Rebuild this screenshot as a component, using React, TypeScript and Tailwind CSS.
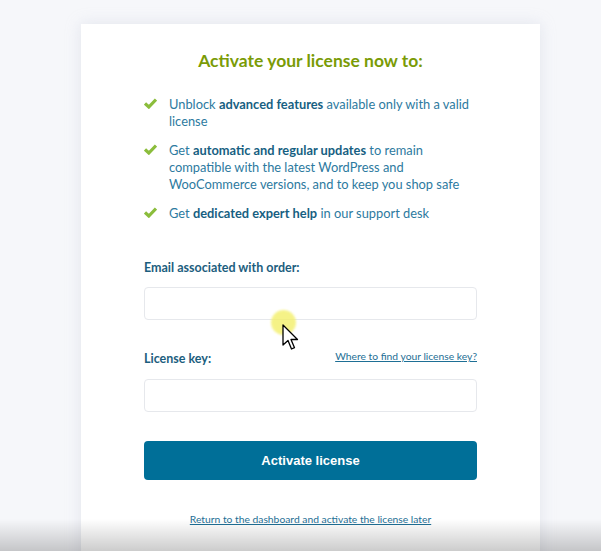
import React from "react";

function Check() {
  return (
    <svg width="13" height="11" viewBox="0 0 13 11" className="shrink-0 mt-[2px]">
      <path d="M1 5.5 L4.8 9 L12 1.5" fill="none" stroke="#8bbd3c" strokeWidth="3.2" strokeLinejoin="miter" />
    </svg>
  );
}

export default function App() {
  const font = { fontFamily: '"Lato", "Open Sans", sans-serif' };
  return (
    <div className="relative w-[601px] h-[551px] overflow-hidden bg-[#f6f7fa]" style={font}>
      <div className="flex justify-start pt-[24px] pl-[81px]">
        <div className="w-[459px] h-[560px] bg-white shadow-[0_0_14px_rgba(190,195,215,0.35)] px-[63px] pt-[25px] flex flex-col">
          <h1 className="text-center text-[17.5px] leading-[24px] font-bold text-[#7a9b06]">
            Activate your license now to:
          </h1>
          <ul className="mt-[23px] flex flex-col gap-[12px] text-[12.85px] leading-[17px] text-[#2d7aa0]">
            <li className="flex gap-[12px]">
              <Check />
              <span>
                Unblock <b className="font-bold text-[#175f82]">advanced features</b> available only with a valid license
              </span>
            </li>
            <li className="flex gap-[12px]">
              <Check />
              <span>
                Get <b className="font-bold text-[#175f82]">automatic and regular updates</b> to remain compatible with the latest WordPress and WooCommerce versions, and to keep you shop safe
              </span>
            </li>
            <li className="flex gap-[12px]">
              <Check />
              <span>
                Get <b className="font-bold text-[#175f82]">dedicated expert help</b> in our support desk
              </span>
            </li>
          </ul>
          <label className="mt-[37px] text-[12.5px] leading-[17px] font-bold text-[#1c5e7e]">
            Email associated with order:
          </label>
          <div className="mt-[11px] h-[33px] rounded-[4px] border border-[#e6e8ec] bg-white" />
          <div className="mt-[29px] flex items-end justify-between">
            <label className="text-[12.5px] leading-[17px] font-bold text-[#1c5e7e]">License key:</label>
            <a className="text-[10.3px] leading-[15px] text-[#1e6f95] underline mb-[3px]">Where to find your license key?</a>
          </div>
          <div className="mt-[12px] h-[33px] rounded-[4px] border border-[#e6e8ec] bg-white" />
          <button
            className="mt-[29px] h-[39px] rounded-[4px] bg-[#006f98] text-white text-[13px] font-bold"
            style={{ fontFamily: '"Liberation Sans", Arial, sans-serif' }}
          >
            Activate license
          </button>
          <a className="mt-[32px] text-center text-[10.3px] leading-[15px] text-[#1e6f95] underline">
            Return to the dashboard and activate the license later
          </a>
        </div>
      </div>
      <div className="absolute left-0 right-0 bottom-0 h-[32px] bg-gradient-to-b from-transparent to-[rgba(0,0,0,0.2)]" />
      <div className="absolute left-[271px] top-[310px] w-[25px] h-[25px] rounded-full bg-[#f3ef6a] opacity-80 blur-[1px]" />
      <svg className="absolute left-[282px] top-[324px]" width="18" height="28" viewBox="0 0 18 28">
        <path d="M1 1 L1 21 L6 16.5 L9.5 25 L12.5 23.7 L9 15.5 L15.5 15.5 Z" fill="white" stroke="black" strokeWidth="1.3" strokeLinejoin="round" />
      </svg>
    </div>
  );
}
